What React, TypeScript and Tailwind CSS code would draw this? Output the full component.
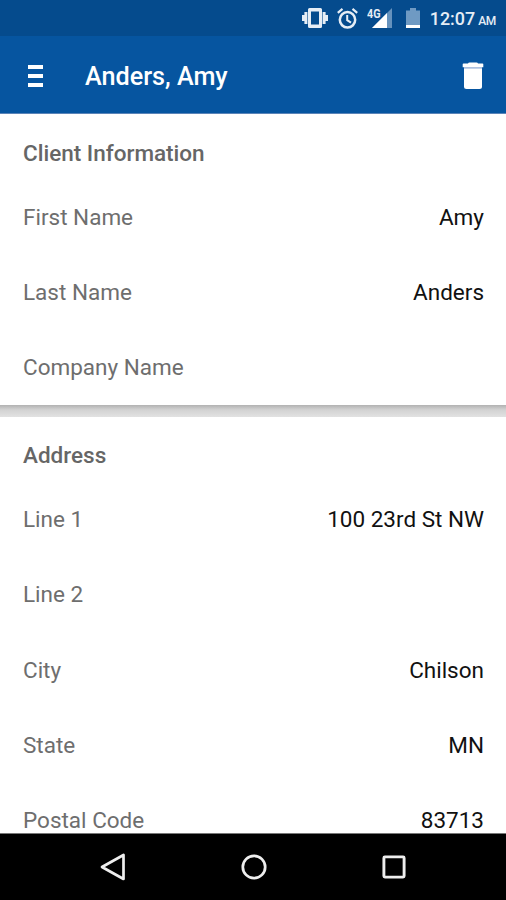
type Field = {
  label: string
  value?: string
}

const clientFields: Field[] = [
  { label: "First Name", value: "Amy" },
  { label: "Last Name", value: "Anders" },
  { label: "Company Name" },
]

const addressFields: Field[] = [
  { label: "Line 1", value: "100 23rd St NW" },
  { label: "Line 2" },
  { label: "City", value: "Chilson" },
  { label: "State", value: "MN" },
  { label: "Postal Code", value: "83713" },
]

export default function App() {
  return (
    <div className="flex h-[900px] w-[506px] flex-col overflow-hidden bg-white font-['Roboto',sans-serif]">
      <StatusBar />
      <header className="flex h-[78px] shrink-0 items-center border-b border-[#5b84b8] bg-[#0655a0] pt-[3px] pr-[22px] pl-7 text-white">
        <button className="flex w-[15px] flex-col gap-[5px]" aria-label="Menu">
          <span className="h-1 bg-white" />
          <span className="h-1 bg-white" />
          <span className="h-1 bg-white" />
        </button>
        <h1 className="ml-[42px] flex-1 pt-px text-[25.2px] leading-none font-medium">Anders, Amy</h1>
        <TrashIcon />
      </header>
      <main className="flex min-h-0 flex-1 flex-col overflow-hidden bg-[#dcdcdc]">
        <Section title="Client Information" fields={clientFields} />
        <div className="h-[11.6px] shrink-0 bg-linear-to-b from-[#b2b2b2] via-[#d2d2d2] via-40% to-[#e2e2e2]" />
        <Section title="Address" fields={addressFields} />
      </main>
      <NavBar />
    </div>
  )
}

function Section({ title, fields }: { title: string; fields: Field[] }) {
  return (
    <section className="shrink-0 bg-white pr-[22px] pl-[23px]">
      <h2 className="flex h-[65.2px] items-center pt-[12.5px] text-[22.5px] leading-none font-medium text-[#666]">
        {title}
      </h2>
      {fields.map((field) => (
        <div key={field.label} className="flex h-[75.25px] items-center justify-between text-[22.5px] leading-none">
          <span className="text-[#6e6e6e]">{field.label}</span>
          <span className="text-[#111]">{field.value}</span>
        </div>
      ))}
    </section>
  )
}

function StatusBar() {
  return (
    <div className="flex h-9 shrink-0 items-center justify-end bg-[#054b8d] pr-2.5 text-[#e6edf5]">
      <svg width="26" height="20" viewBox="0 0 26 20" fill="currentColor">
        <path fillRule="evenodd" d="M7.5 0h11q1.5 0 1.5 1.5v17q0 1.5-1.5 1.5h-11Q6 20 6 18.5v-17Q6 0 7.5 0zM9 3.5v13h8v-13z" />
        <path d="M2.4 4h3v12h-3zM0 7h2.4v6H0zM20.6 4h3v12h-3zM23.6 7H26v6h-2.4z" />
      </svg>
      <svg className="ml-[9px]" width="21" height="21" viewBox="0 0 21 21" fill="none" stroke="currentColor">
        <circle cx="10.5" cy="11.8" r="7.7" strokeWidth="2.5" />
        <path d="M10.2 7v5.2l3.8 2.5" strokeWidth="2" />
        <path d="M.8 4.8l4.7-3.9M20.2 4.8l-4.7-3.9" strokeWidth="2.2" />
      </svg>
      <svg className="ml-[9px]" width="26" height="21" viewBox="0 0 26 21">
        <path d="M25 0v20H5z" fill="#6692bd" />
        <path d="M20 5v15H5z" fill="#fff" />
        <path d="M0 0h14v8l-3 3H0z" fill="#054b8d" />
        <text x="0" y="9.5" fontSize="12" fontWeight="700" fill="#e6edf5" textLength="13.5" lengthAdjust="spacingAndGlyphs">
          4G
        </text>
      </svg>
      <svg className="ml-[13px]" width="14" height="20" viewBox="0 0 14 20">
        <path d="M4 0h6v2.5h4V20H0V2.5h4z" fill="#6f9ac3" />
        <path d="M0 17h14v3H0z" fill="#fff" />
      </svg>
      <div className="ml-2.5 flex items-baseline gap-[3px] pt-0.5 leading-none font-medium">
        <span className="text-[17.9px]">12:07</span>
        <span className="text-[12px] tracking-[-0.3px]">AM</span>
      </div>
    </div>
  )
}

function TrashIcon() {
  return (
    <svg width="22" height="28" viewBox="0 0 22 28" fill="#fff">
      <path d="M6 1.5Q6.3.5 7.5.5h7q1.2 0 1.5 1h4.5q.8 0 .8.8V5.2H.7V2.3q0-.8.8-.8z" />
      <path d="M2 6.3h18v18.2q0 2.5-2.5 2.5h-13Q2 27 2 24.5z" />
      <path d="M2 5.2h18v1.3H2z" fill="#c9d3ea" />
    </svg>
  )
}

function NavBar() {
  return (
    <nav className="flex h-[67px] shrink-0 items-center justify-between border-t border-[#777] bg-black px-[100px]">
      <svg width="26" height="28" viewBox="0 0 26 28" fill="none" stroke="#eee" strokeWidth="2.7" strokeLinejoin="round">
        <path d="M23.5 2v24L2 14z" />
      </svg>
      <svg className="-ml-px" width="26" height="26" viewBox="0 0 26 26" fill="none" stroke="#eee" strokeWidth="2.7">
        <circle cx="13" cy="13" r="11.2" />
      </svg>
      <svg width="24" height="24" viewBox="0 0 24 24" fill="none" stroke="#eee" strokeWidth="2.9">
        <rect x="1.9" y="1.9" width="20.2" height="20.2" rx="1" />
      </svg>
    </nav>
  )
}
